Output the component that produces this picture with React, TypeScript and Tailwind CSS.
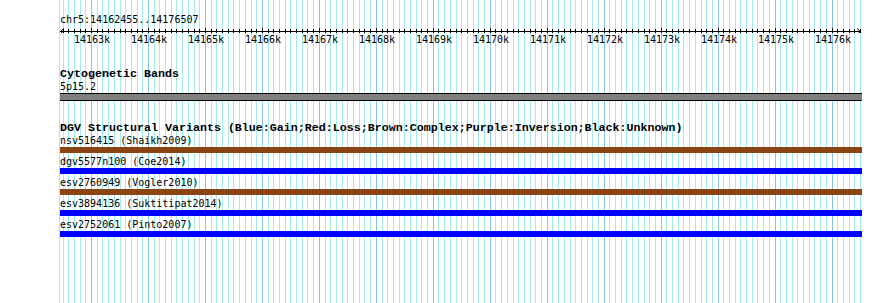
const START = 14162455;
const X0 = 60;
const SCALE = 0.05696; // px per bp

const toX = (bp: number) => X0 + (bp - START) * SCALE;

const minorTicks: number[] = [];
for (let bp = 14162500; bp <= 14176500; bp += 100) minorTicks.push(bp);
const majorTicks: number[] = [];
for (let k = 14163; k <= 14176; k++) majorTicks.push(k * 1000);

const variants = [
  { name: 'nsv516415 (Shaikh2009)', color: 'bg-[#8b4513]' },
  { name: 'dgv5577n100 (Coe2014)', color: 'bg-[#0000ff]' },
  { name: 'esv2760949 (Vogler2010)', color: 'bg-[#8b4513]' },
  { name: 'esv3894136 (Suktitipat2014)', color: 'bg-[#0000ff]' },
  { name: 'esv2752061 (Pinto2007)', color: 'bg-[#0000ff]' },
];

const small = "h-[12px] text-[10px] leading-[11px] font-['DejaVu_Sans_Mono',monospace]";

function Grid() {
  return (
    <svg className="absolute inset-0" width={890} height={303}>
      <rect x={59} y={0} width={1} height={303} fill="#a4eaee" />
      {minorTicks.map((bp) => (
        <rect
          key={bp}
          x={Math.round(toX(bp))}
          y={0}
          width={1}
          height={303}
          fill={bp % 1000 === 0 ? '#88c4ee' : '#a4eaee'}
        />
      ))}
    </svg>
  );
}

function Ruler() {
  return (
    <div>
      <div className={`${small} h-[13px]`}>chr5:14162455..14176507</div>
      <svg width={802} height={6} className="block">
        <line x1={0} y1={4.5} x2={801} y2={4.5} stroke="#000" />
        <polyline points="4,1.5 0.5,4.5 4,7.5" fill="none" stroke="#000" />
        <polyline points="797,1.5 800.5,4.5 797,7.5" fill="none" stroke="#000" />
        {minorTicks.map((bp) => {
          const x = Math.round(toX(bp)) - X0 + 0.5;
          const major = bp % 1000 === 0;
          return (
            <line
              key={bp}
              x1={x}
              x2={x}
              y1={major ? 1 : 2}
              y2={major ? 8 : 7}
              stroke="#000"
            />
          );
        })}
      </svg>
      <div className={`relative ${small} h-[13px]`}>
        {majorTicks.map((bp) => (
          <span
            key={bp}
            className="absolute top-[1px]"
            style={{ left: Math.round(toX(bp)) - X0 - 17 }}
          >
            {bp / 1000}k
          </span>
        ))}
      </div>
    </div>
  );
}

export default function App() {
  return (
    <div className="relative h-[303px] w-[890px] overflow-hidden bg-white text-black font-['Liberation_Mono',monospace]">
      <Grid />
      <div className="relative flex w-[862px] flex-col pl-[60px] pt-[14px]">
        <Ruler />

        <div className="mt-[22px] h-[13px] text-[11.67px] font-bold leading-[13px]">Cytogenetic Bands</div>
        <div className={small}>5p15.2</div>
        <div className="h-[8px] border-y border-black bg-[#808080]" />

        <div className="mt-[21px] h-[13px] whitespace-nowrap text-[11.67px] font-bold leading-[13px]">
          DGV Structural Variants (Blue:Gain;Red:Loss;Brown:Complex;Purple:Inversion;Black:Unknown)
        </div>
        <div className="flex flex-col gap-[3px]">
          {variants.map((v) => (
            <div key={v.name}>
              <div className={small}>{v.name}</div>
              <div className={`h-[6px] ${v.color}`} />
            </div>
          ))}
        </div>
      </div>
    </div>
  );
}
